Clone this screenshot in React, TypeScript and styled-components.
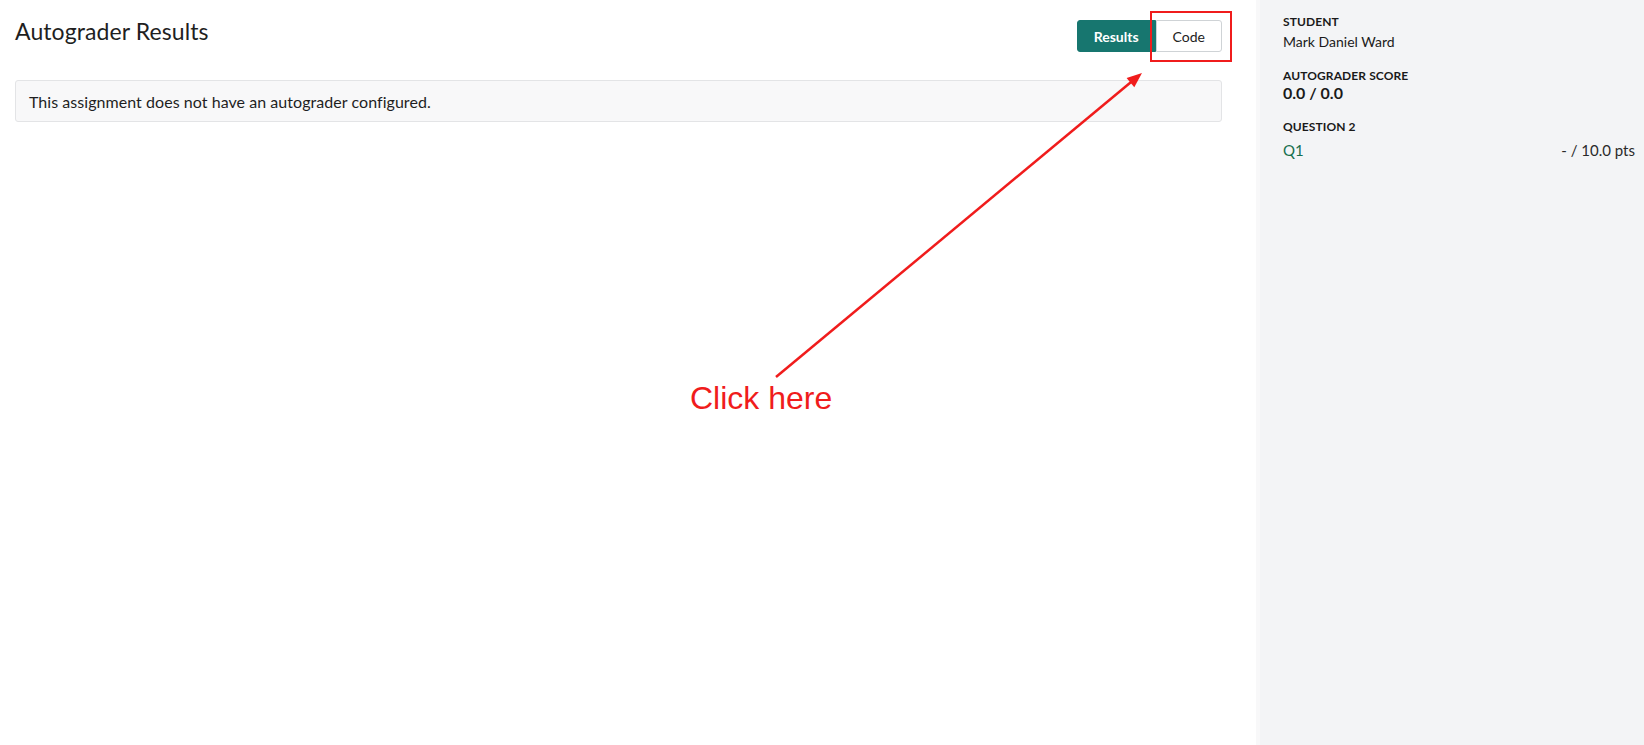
import React from "react";
import styled, { createGlobalStyle } from "styled-components";

const GlobalStyle = createGlobalStyle`
  html, body {
    margin: 0;
    padding: 0;
    background: #ffffff;
    font-family: Lato, "Open Sans", Arial, sans-serif;
    color: #1f1f1f;
  }
  * { box-sizing: border-box; }
`;

const Page = styled.div`
  position: relative;
  display: flex;
  width: 1644px;
  height: 745px;
  overflow: hidden;
`;

const Main = styled.main`
  width: 1256px;
  flex-shrink: 0;
  padding: 18px 34px 0 15px;
  display: flex;
  flex-direction: column;
`;

const Header = styled.div`
  display: flex;
  justify-content: space-between;
  align-items: flex-start;
`;

const Title = styled.h1`
  margin: 0;
  font-size: 23px;
  line-height: 26px;
  font-weight: 400;
  color: #1f1f1f;
  letter-spacing: 0.1px;
`;

const ButtonGroup = styled.div`
  display: flex;
  margin-top: 2px;
`;

const ToggleButton = styled.button<{ $active?: boolean; $first?: boolean }>`
  height: 32px;
  padding: 0 16px;
  font-family: Lato, "Open Sans", Arial, sans-serif;
  font-size: 14px;
  font-weight: ${(p) => (p.$active ? 700 : 400)};
  color: ${(p) => (p.$active ? "#ffffff" : "#222222")};
  background: ${(p) => (p.$active ? "#17766f" : "#ffffff")};
  border: 1px solid ${(p) => (p.$active ? "#17766f" : "#cfd3d6")};
  border-radius: ${(p) => (p.$first ? "3px 0 0 3px" : "0 3px 3px 0")};
  min-width: ${(p) => (p.$active ? "78px" : "66px")};
  cursor: pointer;
`;

const Alert = styled.div`
  margin-top: 28px;
  height: 42px;
  display: flex;
  align-items: center;
  padding: 0 13px;
  background: #f8f8f9;
  border: 1px solid #e3e4e6;
  border-radius: 3px;
  font-size: 16px;
  color: #1f1f1f;
  letter-spacing: 0.05px;
`;

const Sidebar = styled.aside`
  flex: 1;
  background: #f3f4f6;
  border-left: 4px solid #f8f8f9;
  padding: 14px 9px 0 23px;
  display: flex;
  flex-direction: column;
  gap: 16px;
`;

const Section = styled.section<{ $gap?: number }>`
  display: flex;
  flex-direction: column;
  gap: ${(p) => p.$gap ?? 2}px;
`;

const Label = styled.div`
  font-size: 12px;
  line-height: 16px;
  font-weight: 700;
  text-transform: uppercase;
  color: #1a1a1a;
  letter-spacing: 0.1px;
`;

const Value = styled.div<{ $bold?: boolean }>`
  font-size: ${(p) => (p.$bold ? "16px" : "14px")};
  line-height: 20px;
  font-weight: ${(p) => (p.$bold ? 700 : 400)};
  color: #1a1a1a;
  margin-top: ${(p) => (p.$bold ? "-1px" : "0")};
`;

const QuestionRow = styled.div`
  display: flex;
  justify-content: space-between;
  font-size: 15px;
  line-height: 20px;
`;

const QuestionLink = styled.a`
  color: #17704f;
  text-decoration: none;
`;

const Points = styled.span`
  color: #2a2a2a;
`;

const Highlight = styled.div`
  position: absolute;
  left: 1150px;
  top: 11px;
  width: 82px;
  height: 51px;
  border: 2.5px solid #f01c1c;
  pointer-events: none;
`;

const Annotation = styled.svg`
  position: absolute;
  left: 0;
  top: 0;
  pointer-events: none;
`;

const AnnotationText = styled.div`
  position: absolute;
  left: 690px;
  top: 382px;
  font-family: "Liberation Sans", Arial, sans-serif;
  font-size: 32px;
  line-height: 32px;
  color: #f01c1c;
  white-space: nowrap;
`;

export default function App() {
  const x1 = 776;
  const y1 = 377;
  const x2 = 1142;
  const y2 = 73;
  const dx = x2 - x1;
  const dy = y2 - y1;
  const len = Math.sqrt(dx * dx + dy * dy);
  const ux = dx / len;
  const uy = dy / len;
  const headLen = 15;
  const headW = 6;
  const bx = x2 - ux * headLen;
  const by = y2 - uy * headLen;
  const px = -uy;
  const py = ux;
  const head = `${x2},${y2} ${bx + px * headW},${by + py * headW} ${bx - px * headW},${by - py * headW}`;

  return (
    <>
      <GlobalStyle />
      <Page>
        <Main>
          <Header>
            <Title>Autograder Results</Title>
            <ButtonGroup>
              <ToggleButton $active $first>
                Results
              </ToggleButton>
              <ToggleButton>Code</ToggleButton>
            </ButtonGroup>
          </Header>
          <Alert>This assignment does not have an autograder configured.</Alert>
        </Main>
        <Sidebar>
          <Section>
            <Label>Student</Label>
            <Value>Mark Daniel Ward</Value>
          </Section>
          <Section $gap={0}>
            <Label>Autograder Score</Label>
            <Value $bold>0.0 / 0.0</Value>
          </Section>
          <Section $gap={5}>
            <Label>Question 2</Label>
            <QuestionRow>
              <QuestionLink href="#">Q1</QuestionLink>
              <Points>- / 10.0 pts</Points>
            </QuestionRow>
          </Section>
        </Sidebar>
        <Highlight />
        <Annotation width={1644} height={745} viewBox="0 0 1644 745">
          <line
            x1={x1}
            y1={y1}
            x2={bx + ux * 2}
            y2={by + uy * 2}
            stroke="#f01c1c"
            strokeWidth={2.5}
          />
          <polygon points={head} fill="#f01c1c" />
        </Annotation>
        <AnnotationText>Click here</AnnotationText>
      </Page>
    </>
  );
}
